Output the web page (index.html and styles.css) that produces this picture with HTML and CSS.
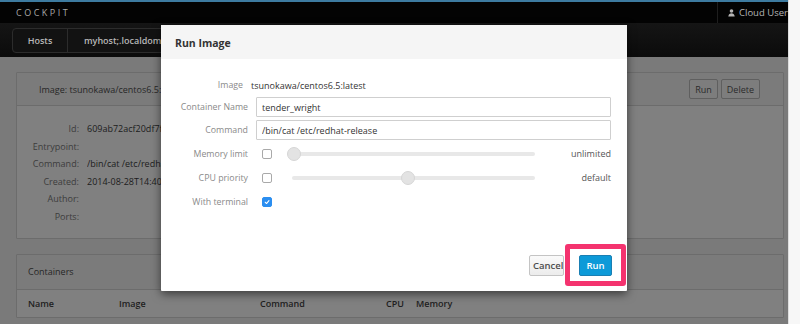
FILE: index.html
```html
<!DOCTYPE html>
<html>
<head>
<meta charset="utf-8">
<link rel="stylesheet" href="styles.css">
</head>
<body>
<div class="screen">
  <div class="page">
    <div class="topline"></div>
    <header class="topbar">
      <span class="brand">COCKPIT</span>
      <div class="user">
        <svg class="user-icon" width="7" height="8" viewBox="0 0 7 8"><circle cx="3.5" cy="2" r="1.8" fill="#b5b5b5"/><path d="M0.3 7.6 C0.6 5 2 4.3 3.5 4.3 C5 4.3 6.4 5 6.7 7.6 Z" fill="#b5b5b5"/></svg>
        <span>Cloud User</span>
        <svg class="caret" width="6" height="4" viewBox="0 0 6 4"><path d="M0 0 L6 0 L3 3.5 Z" fill="#b5b5b5"/></svg>
      </div>
    </header>
    <nav class="navbar">
      <div class="tabs">
        <span class="tab tab-hosts">Hosts</span>
        <span class="tab tab-host">myhost;.localdomain</span>
      </div>
    </nav>
    <main class="content">
      <section class="panel">
        <div class="panel-heading heading-image">
          <span class="heading-title">Image: tsunokawa/centos6.5:latest</span>
          <div class="heading-btns">
            <button class="btn-bg">Run</button>
            <button class="btn-bg">Delete</button>
          </div>
        </div>
        <dl class="props">
          <dt>Id:</dt><dd>609ab72acf20df7f1c2a3b4e5f6a7b8c</dd>
          <dt>Entrypoint:</dt><dd></dd>
          <dt>Command:</dt><dd>/bin/cat /etc/redhat-release</dd>
          <dt>Created:</dt><dd>2014-08-28T14:40:31Z</dd>
          <dt>Author:</dt><dd></dd>
          <dt>Ports:</dt><dd></dd>
        </dl>
      </section>
      <section class="panel">
        <div class="panel-heading heading-containers">Containers</div>
        <table class="containers">
          <thead>
            <tr>
              <th class="c-name">Name</th>
              <th class="c-image">Image</th>
              <th class="c-command">Command</th>
              <th class="c-cpu">CPU</th>
              <th class="c-mem">Memory</th>
            </tr>
          </thead>
        </table>
      </section>
    </main>

    <div class="modal">
      <div class="modal-header">Run Image</div>
      <div class="modal-body">
        <label class="lbl lbl-image">Image</label>
        <div class="static">tsunokawa/centos6.5:latest</div>

        <label class="lbl">Container Name</label>
        <input class="txt" type="text" value="tender_wright">

        <label class="lbl">Command</label>
        <input class="txt" type="text" value="/bin/cat /etc/redhat-release">

        <label class="lbl">Memory limit</label>
        <div class="ctl-row">
          <span class="cb"></span>
          <div class="slider slider-mem"><span class="thumb" style="left:-5px"></span></div>
          <span class="ctl-val">unlimited</span>
        </div>

        <label class="lbl">CPU priority</label>
        <div class="ctl-row">
          <span class="cb"></span>
          <div class="slider"><span class="thumb" style="left:109px"></span></div>
          <span class="ctl-val">default</span>
        </div>

        <label class="lbl">With terminal</label>
        <div class="ctl-row">
          <span class="cb cb-on"><svg width="11" height="11" viewBox="0 0 11 11"><path d="M3 5.8 L4.8 7.6 L8.2 3.6" fill="none" stroke="#fff" stroke-width="1.5" stroke-linecap="round" stroke-linejoin="round"/></svg></span>
        </div>
      </div>
      <div class="modal-footer">
        <button class="btn btn-cancel">Cancel</button>
        <button class="btn btn-run">Run</button>
      </div>
    </div>
    <div class="highlight"></div>
  </div>
  <div class="scrollbar"></div>
</div>
</body>
</html>
```

FILE: styles.css
```css
* { box-sizing: border-box; }
html, body { margin: 0; padding: 0; }
body {
  font-family: "Open Sans", "Liberation Sans", sans-serif;
  font-size: 9px;
  color: #333;
  width: 800px;
  height: 324px;
  overflow: hidden;
  background: #f5f5f5;
}
.screen { display: flex; width: 800px; height: 324px; }
.page {
  position: relative;
  width: 788px;
  height: 324px;
  background: #7a7a7a;
  overflow: hidden;
}
.scrollbar {
  width: 12px;
  background: #f7f7f7;
  border-left: 1px solid #dedede;
}
.topline { height: 2px; background: #3d7ba0; }
.topbar {
  height: 21px;
  background: #030303;
  display: flex;
  align-items: center;
  justify-content: space-between;
}
.brand {
  margin-left: 16px;
  font-size: 9px;
  letter-spacing: 2.5px;
  color: #a8a8a8;
}
.user {
  height: 21px;
  display: flex;
  align-items: center;
  gap: 4px;
  padding-left: 10px;
  border-left: 1px solid #1e1e1e;
  color: #b5b5b5;
  font-size: 9.5px;
  width: 71px;
  white-space: nowrap;
}
.user-icon { flex: none; }
.caret { flex: none; margin-left: 1px; }
.navbar {
  height: 34px;
  background: linear-gradient(#151515, #0b0b0b);
  padding: 5px 0 0 12px;
}
.tabs {
  display: inline-flex;
  height: 25px;
  border: 1px solid #2c2c2c;
  border-radius: 4px;
  background: #121212;
  width: 300px;
}
.tab {
  display: flex;
  align-items: center;
  color: #b8b8b8;
  font-weight: 600;
  font-size: 9px;
}
.tab-hosts {
  width: 55px;
  justify-content: center;
  border-right: 1px solid #2c2c2c;
}
.tab-host { padding-left: 16px; }

.content { padding: 15px 4px 0 16px; }
.panel {
  background: #808080;
  border: 1px solid #6c6c6c;
  border-radius: 1px;
  margin-bottom: 15px;
}
.panel-heading {
  background: #7b7b7b;
  border-bottom: 1px solid #6c6c6c;
  display: flex;
  align-items: center;
  color: #272727;
}
.heading-image {
  height: 33px;
  padding: 0 23px 0 22px;
  justify-content: space-between;
}
.heading-title { white-space: nowrap; }
.heading-btns { display: flex; gap: 3px; }
.btn-bg {
  font-family: inherit;
  font-size: 9px;
  height: 20px;
  padding: 0 5px;
  background: #7d7d7d;
  border: 1px solid #5f5f5f;
  border-radius: 2px;
  color: #2b2b2b;
}
.props {
  margin: 0;
  padding: 14px 0 12px 0;
  display: grid;
  grid-template-columns: 62px 1fr;
  column-gap: 8px;
  line-height: 17.6px;
}
.props dt { text-align: right; color: #3c3c3c; }
.props dd {
  margin: 0;
  color: #1c1c1c;
  max-width: 74px;
  overflow: hidden;
  white-space: nowrap;
}
.heading-containers {
  height: 35px;
  padding-left: 11px;
  color: #262626;
}
.containers { border-collapse: collapse; }
.containers th {
  height: 27px;
  padding: 0;
  text-align: left;
  font-weight: 600;
  color: #202020;
  font-size: 9px;
}
.c-name { width: 102px; padding-left: 11px !important; }
.c-image { width: 141px; }
.c-command { width: 126px; }
.c-cpu { width: 30px; }

.modal {
  position: absolute;
  left: 161px;
  top: 25px;
  width: 466px;
  background: #fff;
  border-radius: 1px;
  box-shadow: 0 3px 10px rgba(0,0,0,0.55);
}
.modal-header {
  height: 34px;
  background: #f5f5f5;
  padding-left: 14px;
  display: flex;
  align-items: center;
  font-weight: 700;
  font-size: 10.5px;
  color: #333;
  padding-top: 2px;
}
.modal-body {
  display: grid;
  grid-template-columns: 73px 355px;
  grid-template-rows: 18px 20px 20px 21px 21px 21px;
  column-gap: 8px;
  row-gap: 3px;
  padding: 17px 16px 43px 14px;
}
.lbl {
  text-align: right;
  color: #8a8a8a;
  align-self: center;
  white-space: nowrap;
  font-size: 8.8px;
}
.lbl-image { margin-right: 5px; }
.static {
  align-self: center;
  margin-left: -5px;
  color: #333;
}
.txt {
  height: 20px;
  border: 1px solid #cfcfcf;
  border-radius: 1px;
  padding: 0 5px;
  font-family: inherit;
  font-size: 9px;
  color: #333;
  width: 355px;
  outline: none;
}
.ctl-row {
  display: flex;
  align-items: center;
}
.cb {
  flex: none;
  width: 10px;
  height: 10px;
  margin-left: 6px;
  border: 1px solid #a9a9a9;
  border-radius: 2px;
  background: #fff;
  display: flex;
  align-items: center;
  justify-content: center;
}
.cb-on {
  background: #2b8ef0;
  border-color: #2b8ef0;
}
.cb-on svg { width: 10px; height: 10px; }
.slider {
  position: relative;
  flex: none;
  width: 243px;
  height: 4px;
  margin-left: 20px;
  background: #e8e8e8;
  border-radius: 2px;
}
.thumb {
  position: absolute;
  top: -5px;
  width: 14px;
  height: 14px;
  border-radius: 50%;
  background: #e3e3e3;
  border: 1px solid #d6d6d6;
}
.ctl-val {
  flex: 1;
  text-align: right;
  color: #555;
}
.modal-footer {
  display: flex;
  justify-content: flex-end;
  gap: 15px;
  padding: 0 15px 15px 0;
}
.btn {
  font-family: inherit;
  font-size: 9.5px;
  font-weight: 600;
  height: 21px;
  border-radius: 2px;
}
.btn-cancel {
  padding: 0 3px;
  width: 35px;
  background: linear-gradient(#fafafa, #ececec);
  border: 1px solid #c4c4c4;
  color: #4d4d4d;
  overflow: hidden;
}
.btn-run {
  width: 33px;
  padding: 0;
  background: #0d9ad8;
  border: 1px solid #1a7fb3;
  color: #fff;
}
.highlight {
  position: absolute;
  left: 565px;
  top: 244px;
  width: 61px;
  height: 42px;
  border: 5px solid #f4336f;
  border-radius: 3px;
}
```
